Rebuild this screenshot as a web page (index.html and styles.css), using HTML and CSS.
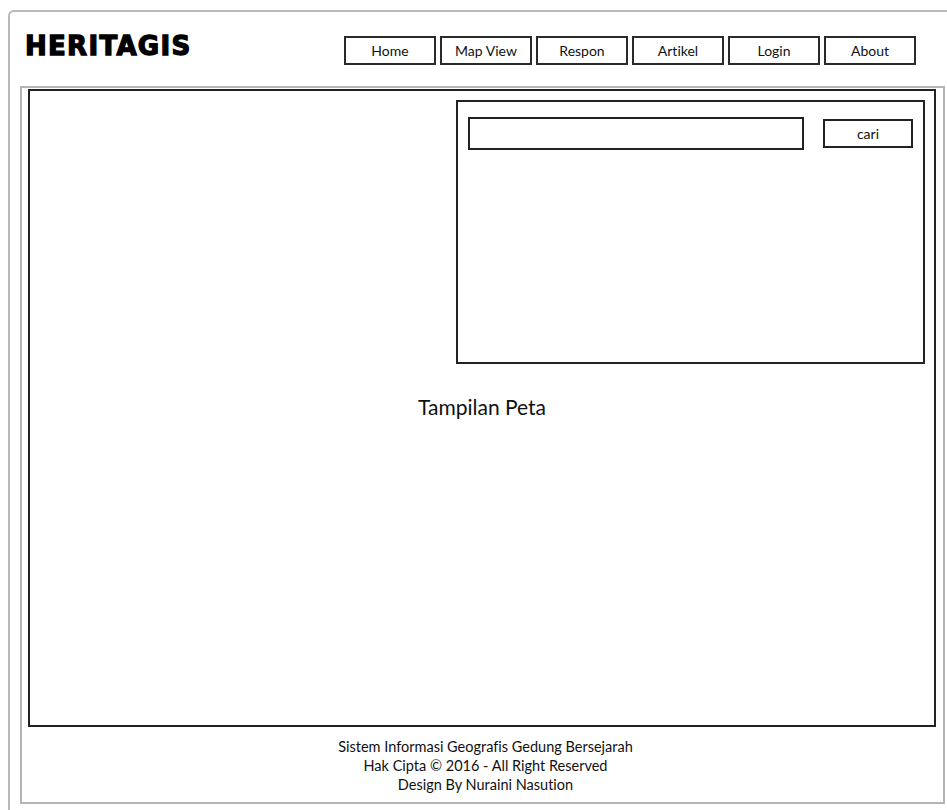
FILE: index.html
```html
<!DOCTYPE html>
<html lang="id">
<head>
<meta charset="utf-8">
<title>HERITAGIS - Map View</title>
<link rel="stylesheet" href="styles.css">
</head>
<body>
<div class="page">
  <header class="header">
    <div class="logo">HERITAGIS</div>
    <nav class="nav">
      <a class="nav-item" href="#">Home</a>
      <a class="nav-item" href="#">Map View</a>
      <a class="nav-item" href="#">Respon</a>
      <a class="nav-item" href="#">Artikel</a>
      <a class="nav-item" href="#">Login</a>
      <a class="nav-item" href="#">About</a>
    </nav>
  </header>

  <section class="frame">
    <div class="map">
      <div class="map-label">Tampilan Peta</div>
      <div class="search-panel">
        <div class="search-row">
          <div class="search-input"></div>
          <button class="search-btn" type="button">cari</button>
        </div>
      </div>
    </div>
    <footer class="footer">
      <p>Sistem Informasi Geografis Gedung Bersejarah</p>
      <p>Hak Cipta &copy; 2016 - All Right Reserved</p>
      <p>Design By Nuraini Nasution</p>
    </footer>
  </section>
</div>
</body>
</html>
```

FILE: styles.css
```css
html, body {
  margin: 0;
  padding: 0;
  background: #ffffff;
  overflow: hidden;
}

body {
  font-family: Lato, "Open Sans", sans-serif;
  font-variant-ligatures: none;
  color: #111;
  width: 947px;
  height: 810px;
}

/* outer window, open on the right and bottom */
.page {
  margin: 10px 0 0 8px;
  width: 960px;
  height: 820px;
  border-top: 2px solid #b9b9b9;
  border-left: 2px solid #b9b9b9;
  border-top-left-radius: 6px;
  box-sizing: border-box;
}

.header {
  display: flex;
  align-items: flex-start;
  height: 74px;
  box-sizing: border-box;
}

.logo {
  font-family: "DejaVu Sans", sans-serif;
  font-weight: bold;
  font-size: 26px;
  line-height: 30px;
  letter-spacing: 1.3px;
  -webkit-text-stroke: 1.3px #000;
  color: #000;
  margin: 19px 0 0 15px;
  width: 178px;
}

.nav {
  display: flex;
  gap: 4px;
  margin: 24px 0 0 141px;
}

.nav-item {
  display: flex;
  align-items: center;
  justify-content: center;
  width: 92px;
  height: 29px;
  box-sizing: border-box;
  border: 2px solid #2a2a2a;
  color: #111;
  text-decoration: none;
  font-size: 14px;
}

.frame {
  margin-left: 10px;
  width: 925px;
  height: 718px;
  box-sizing: border-box;
  border: 2px solid #b4b4b4;
  padding: 1px 0 0 6px;
  display: flex;
  flex-direction: column;
}

.map {
  position: relative;
  width: 908px;
  height: 638px;
  box-sizing: border-box;
  border: 2px solid #222;
  display: flex;
  align-items: center;
  justify-content: center;
}

.map-label {
  font-size: 21px;
  color: #111;
  margin-bottom: 3px;
}

/* search box floating over the map */
.search-panel {
  position: absolute;
  left: 426px;
  top: 9px;
  width: 469px;
  height: 264px;
  box-sizing: border-box;
  border: 2px solid #222;
  padding: 15px 10px 0 10px;
}

.search-row {
  display: flex;
  align-items: flex-start;
  gap: 19px;
}

.search-input {
  width: 336px;
  height: 33px;
  box-sizing: border-box;
  border: 2px solid #222;
}

.search-btn {
  margin-top: 2px;
  width: 90px;
  height: 29px;
  box-sizing: border-box;
  border: 2px solid #222;
  background: #fff;
  font-family: Lato, "Open Sans", sans-serif;
  font-variant-ligatures: none;
  font-size: 14px;
  color: #111;
  padding: 0;
}

.footer {
  flex: 1;
  display: flex;
  flex-direction: column;
  align-items: center;
  justify-content: center;
  padding-top: 2px;
}

.footer p {
  margin: 0;
  font-size: 14.5px;
  line-height: 19px;
  color: #111;
}
```
